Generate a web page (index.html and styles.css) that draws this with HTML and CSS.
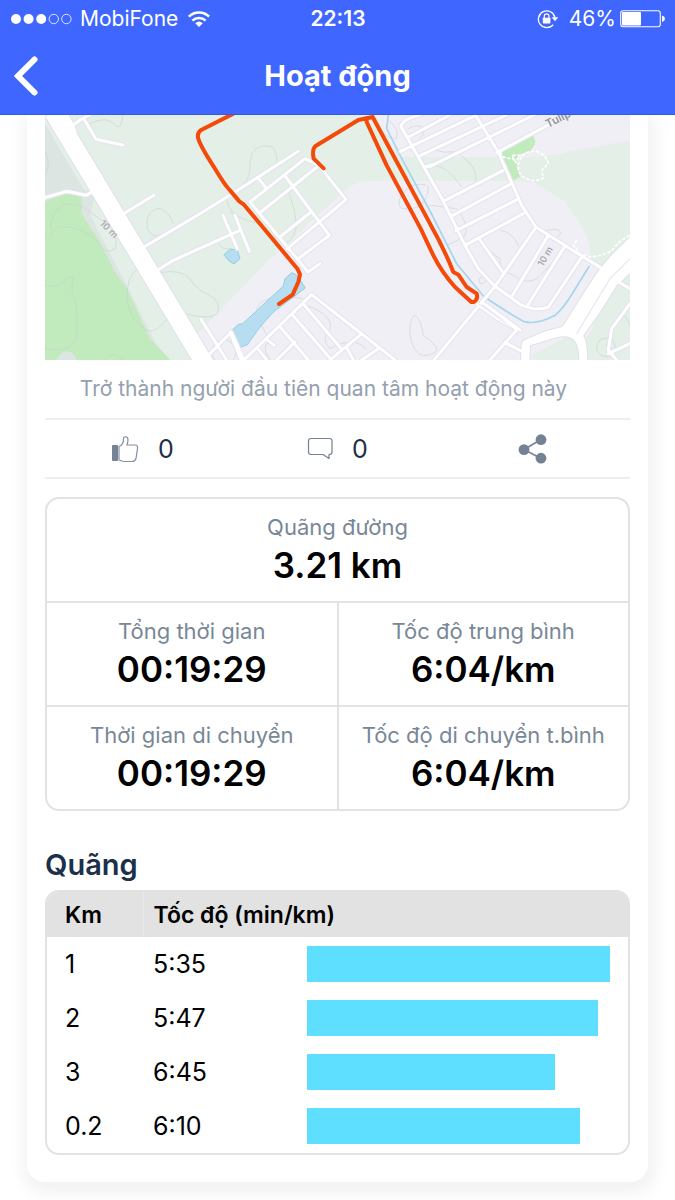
FILE: index.html
```html
<!DOCTYPE html>
<html lang="vi">
<head>
<meta charset="utf-8">
<meta name="viewport" content="width=device-width, initial-scale=1">
<title>Hoạt động</title>
<link rel="stylesheet" href="styles.css">
</head>
<body>
<header class="top">
  <div class="status">
    <div class="status-left">
      <svg class="signal" viewBox="0 0 61 12" aria-hidden="true"><g fill="#fff"><circle cx="5" cy="6" r="5"/><circle cx="17.6" cy="6" r="5"/><circle cx="30.2" cy="6" r="5"/></g><g fill="none" stroke="#fff" stroke-width=".8"><circle cx="42.8" cy="6" r="4.7"/><circle cx="55.4" cy="6" r="4.7"/></g></svg>
      <span>MobiFone</span>
      <svg class="wifi" viewBox="0 0 22 16" aria-hidden="true"><g fill="none" stroke="#fff" stroke-width="2.5"><path d="M.8 5.600C6.500 0 15.500 0 21.200 5.600"/><path d="M4.400 9.600C8 6.100 14 6.100 17.600 9.600"/></g><path d="M7.200 12.300Q11 8.800 14.800 12.300L11 16Z" fill="#fff"/></svg>
    </div>
    <span class="clock">22:13</span>
    <div class="status-right">
      <svg class="lock" viewBox="0 0 22 20" aria-hidden="true"><path d="M16.300 15.600A8.400 8.400 0 1 1 18 8.500" fill="none" stroke="#fff" stroke-width="1.300"/><path d="M14.600 8.300h6.600L18 12.200Z" fill="#fff"/><rect x="5.800" y="8.700" width="7.600" height="5.700" rx=".6" fill="#fff"/><path d="M7.300 9V7.100a2.300 2.300 0 0 1 4.600 0V9" fill="none" stroke="#fff" stroke-width="1.200"/></svg>
      <span>46%</span>
      <svg class="battery" viewBox="0 0 45 18" aria-hidden="true"><rect x=".7" y=".7" width="39.600" height="16" rx="2.500" fill="none" stroke="#fff" stroke-width="1.100"/><rect x="2" y="2" width="19" height="13.400" rx="1" fill="#fff"/><path d="M42 5.500q3 1 3 3.200t-3 3.200Z" fill="#fff"/></svg>
    </div>
  </div>
  <nav class="bar">
    <button class="back" type="button" aria-label="Quay lại"><svg viewBox="0 0 26 40" aria-hidden="true"><path d="M20.500 3.500 4 20l16.500 16.500" fill="none" stroke="#fff" stroke-width="6" stroke-linecap="round"/></svg></button>
    <h1>Hoạt động</h1>
  </nav>
</header>

<main class="card">
  <svg class="map" viewBox="15 9 1755 735" role="img" aria-label="Bản đồ đường chạy">
    <defs>
      <g id="minor" fill="none" stroke-linejoin="round" stroke-linecap="round">
        <path d="M80 9 98 40 130 18 150 9M98 40 105 60M130 18 168 82 248 99M15 257 80 238 138 250 160 238M250 305 342 250M312 405 480 305 600 230 775 118M352 475 400 445 600 355M549 310 592 410M585 310 628 418M483 622 560 744M505 730 574 660 612 744M570 660 604 744"/>
        <path d="M630 270 795 140 837 160 918 263 742 410M630 270 804 480 840 455M660 302 830 166M653 196 678 228M735 192 868 370 772 442M718 376 813 300"/>
        <path d="M612 744 815 548 1065 744M757 608 875 744M790 576 905 712M720 644 805 744M680 682 703 700M655 712 680 744M710 744 765 690M870 744 962 668M920 706 940 744M965 744 1018 708"/>
        <path d="M1140 9Q1090 20 1082 42L1210 268 1275 400 1315 470 1365 523 1440 577Q1490 600 1525 585L1625 435M1306 9 1375 120 1445 280 1488 346 1680 466M1082 118 1310 9M1106 75 1230 9M1142 130 1400 9M1170 163 1500 0M1156 165 1188 155M1370 122 1560 20M1210 268 1388 176M1232 314 1412 216M1248 356 1433 262M1275 400 1455 302M1320 384 1388 480M1488 346 1365 523 1182 744M1525 370 1416 553M1575 402 1463 580M1310 575 1375 621 1430 654 1350 744M1395 692 1450 720M1740 512 1770 530M1770 575 1715 650 1705 715 1730 744M1705 725 1770 695M1325 570 1440 654"/>
      </g>
      <path id="highway" d="M1780 365 1715 430 1680 470 1640 530 1572 638 1565 645 1510 660 1455 684Q1446 688 1445 700L1443 754H1468L1470 700 1550 676Q1585 668 1600 682 1620 700 1618 754H1641Q1644 700 1630 670L1680 600 1730 520 1780 475Z"/>
    </defs>
    <path fill="#f0eff5" d="M15 9h1755v735H15z"/>
    <path fill="#e4efe7" d="M15 9H1005L1075 135H1385L1410 140 1520 132 1770 85V744H1640L1670 470Q1655 450 1648 405 1640 350 1570 265L1480 210 1410 207H975Q930 215 900 250L690 440 570 565 450 690 470 744H15z"/>
    <path fill="#f0eff5" d="M1480 600 1700 450 1640 744H1480z"/>
    <path fill="#e4efe7" d="M1475 744V730L1590 670 1625 700V744zM1645 744 1630 690 1770 490V744z"/>
    <path fill="#dde5e2" d="M15 35 130 230 165 250 150 310 260 520 345 690 390 744H15z"/>
    <path fill="#c1ebbd" d="M15 268 75 247 125 252V305L180 390 225 480 258 525 330 680 390 744H110Q102 720 82 718 58 720 50 744H15z"/>
    <path fill="#c1ebbd" d="M1370 120 1478 68Q1490 85 1483 100L1470 118Q1420 125 1432 165L1440 195 1415 207z"/>
    <g fill="none" stroke="#c3d0cc" stroke-opacity=".55" stroke-width="3">
      <path d="M15 375Q25 390 38 360 48 335 110 350 150 360 180 400 200 430 225 410 235 390 218 355 190 325 150 300 110 265 70 280 30 300 32 350M15 520Q60 530 75 505 100 485 100 500L95 530 110 590V670Q105 725 15 710M150 35Q200 10 225 38 245 60 248 9M15 120Q35 150 15 190M385 615Q350 665 320 655 275 630 262 570 255 490 300 465M362 482Q420 470 450 500 470 535 510 550 545 570 532 605 510 625 435 605M400 335Q380 285 350 290 315 300 322 350 335 380 365 370M195 744Q215 710 250 744M605 232Q635 190 630 150 635 95 690 102 715 110 710 160M570 300Q620 330 665 335M745 240Q770 300 768 350 760 390 735 392M560 250Q560 290 585 305M535 390Q540 415 575 410"/>
      <path d="M790 560Q670 540 650 590L665 640 690 690Q660 700 690 744M800 580Q880 610 870 650 840 680 870 710 940 670 980 712M1125 610C1095 625 1110 740 1160 730S1190 700 1150 670Q1145 625 1125 610ZM1160 220C1095 200 1055 285 1090 290S1165 280 1165 220M1040 20Q1080 50 1070 80 1050 85 1030 60M1170 110 1210 120 1250 120Q1320 170 1305 210M1180 160Q1220 160 1265 225M1170 280 1250 290Q1290 340 1275 370 1250 390 1220 400M1380 355Q1420 360 1435 403M1520 355Q1560 345 1562 365 1550 385 1535 375M1320 384Q1360 430 1380 440 1375 475 1420 490 1460 520 1490 500L1540 450M1320 515Q1310 490 1340 495 1340 515 1320 515M1105 50Q1130 35 1145 45 1160 60 1140 80M1740 600Q1765 620 1770 640"/>
      <circle cx="552" cy="720" r="36"/><circle cx="1698" cy="706" r="28"/>
    </g>
    <g fill="#b6ddf0" stroke="#94cee8" stroke-width="3"><path d="M552 428 570 412 592 413 600 440 582 456 566 446z"/><path d="M574 657 595 637 608 635 730 522 735 500 755 482 772 490 796 528 700 600 660 645 622 698 602 706z"/></g>
    <path fill="none" stroke="#a5d6ec" stroke-width="5" d="M1045 9 1040 50 1080 130 1170 297 1250 455 1330 552Q1400 600 1450 628 1490 640 1545 610 1570 590 1600 540L1648 462"/>
    <use href="#minor" stroke="#e4e3ee" stroke-width="15"/>
    <path d="M40 0 130 150 502 768" fill="none" stroke="#e0e1ea" stroke-width="60"/>
    <use href="#highway" fill="none" stroke="#e0e1ea" stroke-width="6"/>
    <use href="#minor" stroke="#fff" stroke-width="9"/>
    <path d="M40 0 130 150 502 768" fill="none" stroke="#fff" stroke-width="54"/>
    <use href="#highway" fill="#fff"/>
    <path d="M1770 440 1710 500 1610 665" stroke="#e9eaf1" stroke-width="4" fill="none"/>
    <path d="M1315 575 1425 655" stroke="#e7e6ef" stroke-width="3" fill="none"/>
    <g fill="none" stroke="#fff" stroke-width="5" stroke-dasharray="10 5"><path d="M1380 120 1390 135 1430 145 1440 130 1415 130 1430 155M1440 145Q1450 115 1490 118 1520 130 1525 155L1505 175 1510 198Q1480 215 1450 195 1425 175 1440 145M1610 385 1600 400 1620 425 1650 435Q1700 430 1720 410 1740 385 1770 370"/></g>
    <g fill="none" stroke="#f44908" stroke-width="12" stroke-linejoin="round" stroke-linecap="round">
      <path d="M580 5 482 55Q470 65 475 80 480 100 525 170 555 220 570 235L598 268 612 278 772 470 780 487 775 510 758 548 717 576"/>
      <path d="M851 169 821 140Q815 110 828 101L955 24 998 15 1170 335Q1210 405 1240 480L1255 488 1280 525 1310 545Q1315 560 1302 570L1294 570 1245 525Q1205 480 1180 430L1142 350 1040 160 980 30V18"/>
    </g>
    <g class="map-text"><text transform="translate(178 336) rotate(45)">10 m</text><text transform="translate(1508 465) rotate(-60)">10 m</text><text class="street" transform="translate(1524 48) rotate(-27)">Tulip</text></g>
  </svg>

  <p class="hint">Trở thành người đầu tiên quan tâm hoạt động này</p>

  <div class="actions">
    <button type="button" aria-label="Thích"><svg class="like" viewBox="0 0 28 28" aria-hidden="true"><rect x="1" y="10" width="6" height="16" rx="1" fill="#748293"/><path d="M8 11.500C11 10.500 12.600 7.500 12.500 3.500 12.600 1 17 1 17 4.500c0 2-.5 3.500-1 5.500h8c2 0 3 1.500 2.500 3.500L25 23.500c-.6 2-1.600 3-4 3H13c-2 0-3-1-5-1.500Z" fill="none" stroke="#8290a0" stroke-width="1.200" stroke-linejoin="round"/></svg><span>0</span></button>
    <button type="button" aria-label="Bình luận"><svg class="comment" viewBox="0 0 26 24" aria-hidden="true"><path d="M4 1.500h18.500q2.500 0 2.500 2.500v11q0 2.500-2.500 2.500H22V21.500L16 17.500H4Q1.500 17.500 1.500 15V4Q1.500 1.500 4 1.500Z" fill="none" stroke="#748293" stroke-width="1.200" stroke-linejoin="round"/></svg><span>0</span></button>
    <button type="button" aria-label="Chia sẻ"><svg class="share" viewBox="0 0 30 30" aria-hidden="true"><path d="M23 5.500 6 15.500l17 9" fill="none" stroke="#748293" stroke-width="1.600"/><g fill="#748293"><circle cx="23" cy="5.700" r="5.400"/><circle cx="6" cy="15.600" r="5.400"/><circle cx="23" cy="24.200" r="5.400"/></g></svg></button>
  </div>

  <dl class="stats">
    <div class="stat wide"><dt>Quãng đường</dt><dd>3.21 km</dd></div>
    <div class="stat"><dt>Tổng thời gian</dt><dd>00:19:29</dd></div>
    <div class="stat"><dt>Tốc độ trung bình</dt><dd>6:04/km</dd></div>
    <div class="stat"><dt>Thời gian di chuyển</dt><dd>00:19:29</dd></div>
    <div class="stat"><dt>Tốc độ di chuyển t.bình</dt><dd>6:04/km</dd></div>
  </dl>

  <h2>Quãng</h2>
  <div class="splits">
    <table>
      <colgroup><col class="col-km"><col class="col-pace"><col></colgroup>
      <thead><tr><th scope="col">Km</th><th scope="col" colspan="2">Tốc độ (min/km)</th></tr></thead>
      <tbody>
        <tr><td>1</td><td>5:35</td><td><div class="pace" style="width:100%"></div></td></tr>
        <tr><td>2</td><td>5:47</td><td><div class="pace" style="width:96%"></div></td></tr>
        <tr><td>3</td><td>6:45</td><td><div class="pace" style="width:82%"></div></td></tr>
        <tr><td>0.2</td><td>6:10</td><td><div class="pace" style="width:90%"></div></td></tr>
      </tbody>
    </table>
  </div>
</main>
</body>
</html>
```

FILE: styles.css
```css
* { box-sizing: border-box; }
body { margin: 0; background: #fff; color: #000; font-family: Inter, "Noto Sans", sans-serif; }
h1, h2, p, dl, dd { margin: 0; }
svg { display: block; flex: none; }
button { padding: 0; border: 0; background: none; font: inherit; color: inherit; cursor: pointer; }

.top { position: relative; background: #3f66fe; color: #fff; border-bottom: 1px solid #345be0; }
.status { display: grid; grid-template-columns: 1fr auto 1fr; align-items: center; height: 37px; padding: 0 10px 0 11px; font-size: 21px; }
.status-left, .status-right { display: flex; align-items: center; }
.status-left { gap: 8px; }
.status-right { justify-content: flex-end; gap: 4px; }
.clock { font-weight: 600; }
.signal { width: 61px; height: 12px; }
.wifi { width: 22px; height: 16px; margin-left: 2px; }
.lock { width: 22px; height: 20px; margin-right: 6px; }
.battery { width: 45px; height: 18px; }
.bar { display: grid; grid-template-columns: 60px 1fr 60px; align-items: center; height: 77px; }
.back { padding-left: 14px; height: 60px; display: flex; align-items: center; }
.back svg { width: 26px; height: 40px; }
h1 { font-size: 29px; line-height: 36px; font-weight: 700; text-align: center; }

.card { margin: 0 27px 18px; padding: 0 18px 27px; background: #fff; border-radius: 0 0 18px 18px; box-shadow: 2px 6px 16px 6px rgba(0, 0, 0, .05); }
.map { width: 100%; height: auto; }
.map-text { font-family: Inter, sans-serif; font-size: 28px; font-weight: 600; fill: #aaa; stroke: #f0eff5; stroke-width: 3px; paint-order: stroke; }
.map-text .street { font-size: 34px; fill: #999; }

.hint { padding: 12px 28px 12px 0; font-size: 21px; line-height: 34px; color: #93a0ae; text-align: center; }
.actions { display: grid; grid-template-columns: repeat(3, 1fr); height: 61px; border: solid #eee; border-width: 2px 0; color: #1b3049; font-size: 25px; }
.actions button { display: flex; align-items: center; justify-content: center; gap: 19px; }
.like { width: 28px; height: 28px; }
.comment { width: 26px; height: 24px; }
.share { width: 30px; height: 30px; }

.stats { display: grid; grid-template-columns: 1fr 1fr; gap: 2px; margin-top: 18px; background: #e2e2e2; border: 2px solid #e2e2e2; border-radius: 14px; overflow: hidden; }
.stat { padding: 11px 8px 14px; background: #fff; text-align: center; }
.wide { grid-column: 1 / -1; }
dt { font-size: 22px; line-height: 34px; color: #788797; white-space: nowrap; }
dd { font-size: 35px; line-height: 43px; font-weight: 600; }

h2 { margin-top: 36px; font-size: 29px; line-height: 36px; font-weight: 600; color: #1b3049; }
.splits { margin-top: 7px; border: 2px solid #e2e2e2; border-radius: 14px; overflow: hidden; }
table { width: 100%; border-collapse: collapse; table-layout: fixed; font-size: 25px; }
.col-km { width: 96px; }
.col-pace { width: 154px; }
th { height: 45px; padding: 0 0 0 10px; background: #e2e2e2; font-size: 23px; font-weight: 600; text-align: left; }
th + th { border-left: 1px solid #e8e8e8; }
td { height: 54px; padding: 0 0 0 10px; }
th:first-child, td:first-child { padding-left: 18px; }
td:last-child { padding: 0 18px 0 10px; }
.pace { height: 36px; background: #5fdfff; }
```
